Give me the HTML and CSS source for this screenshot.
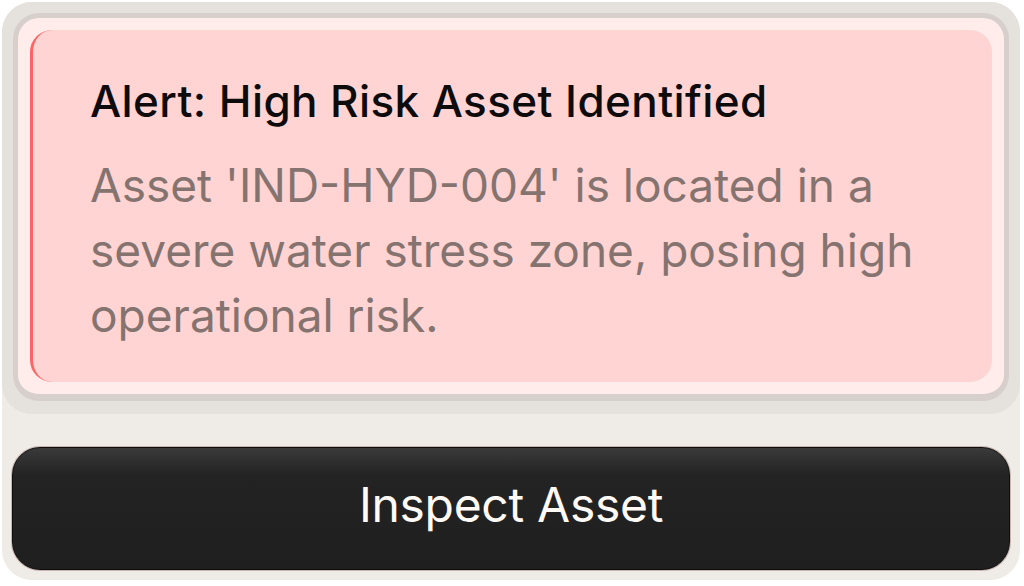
FILE: index.html
```html
<!DOCTYPE html>
<html lang="en">
<head>
  <meta charset="UTF-8" />
  <meta name="viewport" content="width=device-width, initial-scale=1.0" />
  <title>Asset Alert</title>
  <link rel="stylesheet" href="styles.css">
</head>
<body>
  <div class="panel">
    <div class="alert-shell">
      <div class="alert-frame">
        <div class="alert-body">
          <h2 class="alert-title">Alert: High Risk Asset Identified</h2>
          <p class="alert-text">Asset 'IND-HYD-004' is located in a severe water stress zone, posing high operational risk.</p>
        </div>
      </div>
    </div>
    <button class="inspect-btn" type="button">Inspect Asset</button>
  </div>
</body>
</html>
```

FILE: styles.css
```css
body {
  margin: 0;
  background: #fff;
  font-family: 'Inter', 'Noto Sans', sans-serif;
}
.panel {
  margin: 2px;
  width: 1018px;
  height: 578px;
  box-sizing: border-box;
  background: #efebe6;
  border-radius: 30px;
  display: flex;
  flex-direction: column;
}
.alert-shell {
  background: #e5e1dd;
  border-radius: 30px;
  padding: 11px 11px 13px;
}
.alert-frame {
  background: #ffeceb;
  border: 5px solid #d6cfcc;
  border-bottom-width: 7px;
  border-radius: 26px;
  padding: 12px;
}
.alert-body {
  background: #ffd4d3;
  border-left: 3px solid #ff6464;
  border-radius: 22px;
  padding: 45px 55px 34px 57px;
}
.alert-title {
  margin: 0;
  font-size: 44px;
  font-weight: 500;
  line-height: 52px;
  letter-spacing: 0.4px;
  color: #0d0b0b;
}
.alert-text {
  margin: 26px 0 0;
  font-size: 46px;
  font-weight: 400;
  line-height: 65px;
  letter-spacing: 0;
  color: #857370;
}
.inspect-btn {
  margin: 33px 10px 10px;
  height: 123px;
  padding: 0 0 9px;
  border: 1px solid #0f0d0d;
  border-radius: 28px;
  background: linear-gradient(#3a3a3a, #232323 22%, #1f1f1f);
  box-shadow: 0 0 0 1px #c8b5b0;
  color: #fffaf6;
  font-family: 'Inter', 'Noto Sans', sans-serif;
  font-size: 48px;
  font-weight: 400;
  letter-spacing: -0.3px;
}
```
